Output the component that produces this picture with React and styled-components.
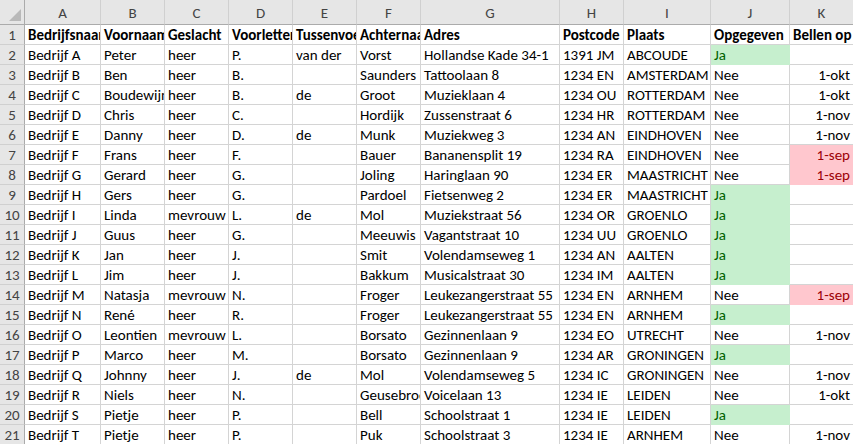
import React from "react";
import styled, { createGlobalStyle } from "styled-components";

const GlobalStyle = createGlobalStyle`
  html, body {
    margin: 0;
    padding: 0;
    background: #ffffff;
    overflow: hidden;
  }
`;

const columns = [
  { letter: "A", width: 76 },
  { letter: "B", width: 64 },
  { letter: "C", width: 64 },
  { letter: "D", width: 64 },
  { letter: "E", width: 64 },
  { letter: "F", width: 64 },
  { letter: "G", width: 139 },
  { letter: "H", width: 64 },
  { letter: "I", width: 87 },
  { letter: "J", width: 79 },
  { letter: "K", width: 64 },
];

const header = [
  "Bedrijfsnaam", "Voornaam", "Geslacht", "Voorletters", "Tussenvoegsel",
  "Achternaam", "Adres", "Postcode", "Plaats", "Opgegeven", "Bellen op",
];

// [bedrijf, voornaam, geslacht, voorletters, tussenvoegsel, achternaam, adres, postcode, plaats, opgegeven, bellen op]
const rows = [
  ["Bedrijf A", "Peter", "heer", "P.", "van der", "Vorst", "Hollandse Kade 34-1", "1391 JM", "ABCOUDE", "Ja", ""],
  ["Bedrijf B", "Ben", "heer", "B.", "", "Saunders", "Tattoolaan 8", "1234 EN", "AMSTERDAM", "Nee", "1-okt"],
  ["Bedrijf C", "Boudewijn", "heer", "B.", "de", "Groot", "Muzieklaan 4", "1234 OU", "ROTTERDAM", "Nee", "1-okt"],
  ["Bedrijf D", "Chris", "heer", "C.", "", "Hordijk", "Zussenstraat 6", "1234 HR", "ROTTERDAM", "Nee", "1-nov"],
  ["Bedrijf E", "Danny", "heer", "D.", "de", "Munk", "Muziekweg 3", "1234 AN", "EINDHOVEN", "Nee", "1-nov"],
  ["Bedrijf F", "Frans", "heer", "F.", "", "Bauer", "Bananensplit 19", "1234 RA", "EINDHOVEN", "Nee", "1-sep"],
  ["Bedrijf G", "Gerard", "heer", "G.", "", "Joling", "Haringlaan 90", "1234 ER", "MAASTRICHT", "Nee", "1-sep"],
  ["Bedrijf H", "Gers", "heer", "G.", "", "Pardoel", "Fietsenweg 2", "1234 ER", "MAASTRICHT", "Ja", ""],
  ["Bedrijf I", "Linda", "mevrouw", "L.", "de", "Mol", "Muziekstraat 56", "1234 OR", "GROENLO", "Ja", ""],
  ["Bedrijf J", "Guus", "heer", "G.", "", "Meeuwis", "Vagantstraat 10", "1234 UU", "GROENLO", "Ja", ""],
  ["Bedrijf K", "Jan", "heer", "J.", "", "Smit", "Volendamseweg 1", "1234 AN", "AALTEN", "Ja", ""],
  ["Bedrijf L", "Jim", "heer", "J.", "", "Bakkum", "Musicalstraat 30", "1234 IM", "AALTEN", "Ja", ""],
  ["Bedrijf M", "Natasja", "mevrouw", "N.", "", "Froger", "Leukezangerstraat 55", "1234 EN", "ARNHEM", "Nee", "1-sep"],
  ["Bedrijf N", "René", "heer", "R.", "", "Froger", "Leukezangerstraat 55", "1234 EN", "ARNHEM", "Ja", ""],
  ["Bedrijf O", "Leontien", "mevrouw", "L.", "", "Borsato", "Gezinnenlaan 9", "1234 EO", "UTRECHT", "Nee", "1-nov"],
  ["Bedrijf P", "Marco", "heer", "M.", "", "Borsato", "Gezinnenlaan 9", "1234 AR", "GRONINGEN", "Ja", ""],
  ["Bedrijf Q", "Johnny", "heer", "J.", "de", "Mol", "Volendamseweg 5", "1234 IC", "GRONINGEN", "Nee", "1-nov"],
  ["Bedrijf R", "Niels", "heer", "N.", "", "Geusebroek", "Voicelaan 13", "1234 IE", "LEIDEN", "Nee", "1-okt"],
  ["Bedrijf S", "Pietje", "heer", "P.", "", "Bell", "Schoolstraat 1", "1234 IE", "LEIDEN", "Ja", ""],
  ["Bedrijf T", "Pietje", "heer", "P.", "", "Puk", "Schoolstraat 3", "1234 IE", "ARNHEM", "Nee", "1-nov"],
];

const fills = {
  good: { bg: "#c6efce", fg: "#006100" },
  bad: { bg: "#ffc7ce", fg: "#9c0006" },
};

const Sheet = styled.div`
  display: grid;
  grid-template-columns: 25px ${columns.map((c) => `${c.width}px`).join(" ")};
  grid-auto-rows: 20px;
  grid-template-rows: 25px;
  font-family: Calibri, Carlito, Lato, "Liberation Sans", sans-serif;
  font-size: 15px;
  color: #000;
  width: max-content;
`;

const Corner = styled.div`
  position: relative;
  background: #e6e6e6;
  border-right: 1px solid #ababab;
  border-bottom: 1px solid #ababab;
  box-sizing: border-box;

  &::after {
    content: "";
    position: absolute;
    right: 3px;
    bottom: 3px;
    width: 0;
    height: 0;
    border-left: 12px solid transparent;
    border-bottom: 12px solid #b9b9b9;
  }
`;

const ColHead = styled.div`
  display: flex;
  align-items: center;
  justify-content: center;
  background: #e6e6e6;
  color: #444;
  border-right: 1px solid #d0d0d0;
  border-bottom: 1px solid #ababab;
  box-sizing: border-box;
  padding-top: 2px;
`;

const RowHead = styled.div`
  display: flex;
  align-items: center;
  justify-content: center;
  background: #e6e6e6;
  color: #444;
  border-right: 1px solid #ababab;
  border-bottom: 1px solid #d0d0d0;
  box-sizing: border-box;
`;

const Cell = styled.div`
  display: flex;
  align-items: center;
  justify-content: ${(p) => (p.$right ? "flex-end" : "flex-start")};
  padding: 1px 3px 0 3px;
  overflow: hidden;
  white-space: nowrap;
  box-sizing: border-box;
  font-weight: ${(p) => (p.$bold ? 700 : 400)};
  background: ${(p) => (p.$fill ? fills[p.$fill].bg : "#fff")};
  color: ${(p) => (p.$fill ? fills[p.$fill].fg : "#000")};
  border-right: 1px solid ${(p) => (p.$fill ? fills[p.$fill].bg : "#d4d4d4")};
  border-bottom: 1px solid ${(p) => (p.$fill ? fills[p.$fill].bg : "#d4d4d4")};
`;

function fillFor(col, value) {
  if (col === 9 && value === "Ja") return "good";
  if (col === 10 && value === "1-sep") return "bad";
  return undefined;
}

export default function App() {
  return (
    <>
      <GlobalStyle />
      <Sheet>
        <Corner />
        {columns.map((c) => (
          <ColHead key={c.letter}>{c.letter}</ColHead>
        ))}

        <RowHead>1</RowHead>
        {header.map((h) => (
          <Cell key={h} $bold>{h}</Cell>
        ))}

        {rows.map((row, r) => (
          <React.Fragment key={r}>
            <RowHead>{r + 2}</RowHead>
            {row.map((value, c) => (
              <Cell key={c} $right={c === 10} $fill={fillFor(c, value)}>
                {value}
              </Cell>
            ))}
          </React.Fragment>
        ))}
      </Sheet>
    </>
  );
}
